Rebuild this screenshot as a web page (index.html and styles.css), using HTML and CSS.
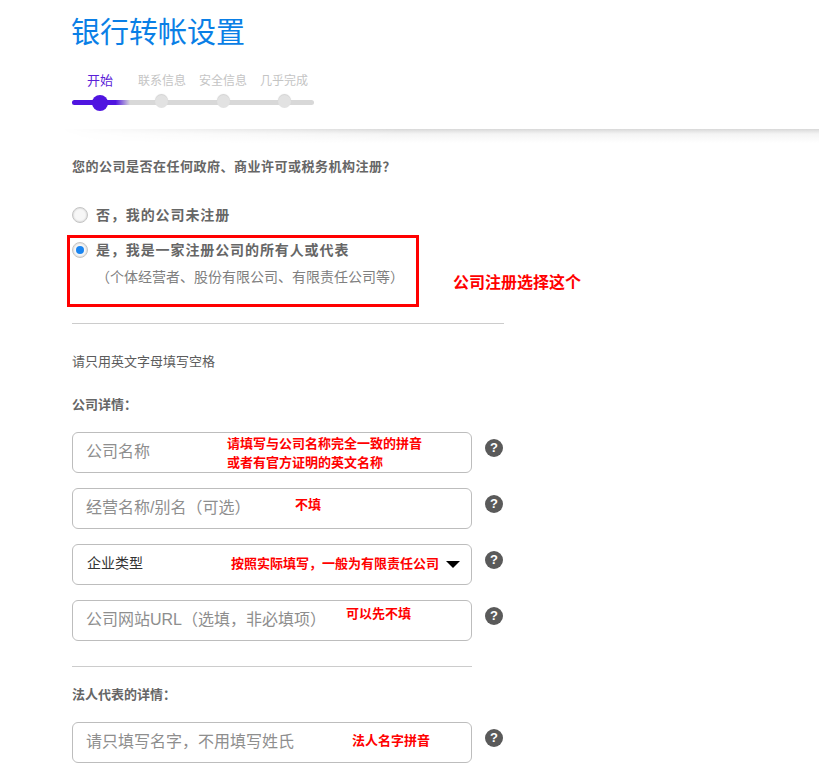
FILE: index.html
```html
<!DOCTYPE html>
<html lang="zh">
<head>
<meta charset="utf-8">
<title>银行转帐设置</title>
<link rel="stylesheet" href="styles.css">
</head>
<body>
<header class="top">
  <h1 class="title">银行转帐设置</h1>
  <div class="steps">
    <div class="labels">
      <span class="label active">开始</span>
      <span class="label">联系信息</span>
      <span class="label">安全信息</span>
      <span class="label">几乎完成</span>
    </div>
    <div class="track">
      <div class="fill"></div>
      <span class="knob on"></span>
      <span class="knob k2"></span>
      <span class="knob k3"></span>
      <span class="knob k4"></span>
    </div>
  </div>
</header>
<main class="main">
  <p class="question">您的公司是否在任何政府、商业许可或税务机构注册？</p>
  <div class="radio-row no"><span class="radio"></span><span class="radio-text">否，我的公司未注册</span></div>
  <div class="radio-row yes"><span class="radio checked"></span><span class="radio-text">是，我是一家注册公司的所有人或代表</span></div>
  <p class="radio-note">（个体经营者、股份有限公司、有限责任公司等）</p>
  <hr class="rule wide">
  <p class="hint">请只用英文字母填写空格</p>
  <h2 class="section">公司详情：</h2>
  <div class="field-row"><div class="field">公司名称</div><span class="help">?</span></div>
  <div class="field-row"><div class="field">经营名称/别名（可选）</div><span class="help">?</span></div>
  <div class="field-row"><div class="field select">企业类型<span class="caret"></span></div><span class="help">?</span></div>
  <div class="field-row"><div class="field">公司网站URL（选填，非必填项）</div><span class="help">?</span></div>
  <hr class="rule">
  <h2 class="section legal">法人代表的详情：</h2>
  <div class="field-row"><div class="field">请只填写名字，不用填写姓氏</div><span class="help">?</span></div>
</main>
<div class="mark-box"></div>
<span class="note big n0">公司注册选择这个</span>
<span class="note n1">请填写与公司名称完全一致的拼音<br>或者有官方证明的英文名称</span>
<span class="note n2">不填</span>
<span class="note n3">按照实际填写，一般为有限责任公司</span>
<span class="note n4">可以先不填</span>
<span class="note n5">法人名字拼音</span>
</body>
</html>
```
FILE: styles.css
```css
* { box-sizing: border-box; }
html, body { margin: 0; height: 769px; overflow: hidden; }
body {
  position: relative;
  background: #fff;
  font-family: "Noto Sans CJK SC", "Noto Sans", sans-serif;
  color: #555;
}
.top {
  position: relative;
  height: 129px;
  padding: 9px 0 0 71px;
}
.top::after {
  content: "";
  position: absolute;
  left: 0;
  right: 0;
  top: 129px;
  height: 14px;
  background: linear-gradient(#d8d8d8, #f4f4f4 35%, #fff);
  -webkit-mask-image: linear-gradient(90deg, transparent 60px, #000 400px);
  mask-image: linear-gradient(90deg, transparent 60px, #000 400px);
}
.title {
  margin: 0;
  font-size: 29px;
  line-height: 42px;
  font-weight: 400;
  color: #0a7fe6;
}
.steps { width: 242px; margin: 20px 0 0 1px; }
.labels { display: flex; height: 18px; padding-left: 15px; gap: 13px; font-size: 12px; line-height: 18px; color: #c4c4c4; }
.label { width: 48px; }
.label.active { width: 38px; font-size: 13px; color: #5a20d8; }
.track {
  position: relative;
  height: 5px;
  margin-top: 11px;
  border-radius: 3px;
  background: #d8d8d8;
}
.fill {
  width: 58px;
  height: 100%;
  border-radius: 3px 0 0 3px;
  background: linear-gradient(90deg, #4f14e0 75%, #d8d8d8);
}
.knob {
  position: absolute;
  top: -5px;
  left: 83px;
  width: 13px;
  height: 13px;
  border-radius: 50%;
  background: #e2e2e2;
  box-shadow: 0 -1px 1px #d0d0d0;
}
.knob.on { left: 20px; top: -5px; width: 16px; height: 16px; background: #4f14e0; box-shadow: none; }
.knob.k3 { left: 145px; }
.knob.k4 { left: 206px; }

.main { padding: 28px 0 0 72px; }
.question { margin: 0; font-size: 13px; letter-spacing: 0.5px; line-height: 18px; font-weight: 700; color: #666; }
.radio-row { display: flex; align-items: center; gap: 8px; height: 18px; font-size: 14px; letter-spacing: 0.9px; font-weight: 700; color: #666; }
.radio-row.no { margin-top: 30px; }
.radio-row.yes { margin-top: 17px; }
.radio {
  width: 16px;
  height: 16px;
  margin-top: 2px;
  border-radius: 50%;
  border: 1px solid #c4c4c4;
  background: #f7f7f7;
  box-shadow: inset 0 0 2px #bbb;
  display: flex;
  align-items: center;
  justify-content: center;
}
.radio.checked::after { content: ""; width: 8px; height: 8px; border-radius: 50%; background: #1a85f0; }
.radio-note { margin: 9px 0 0 24px; font-size: 14px; line-height: 18px; color: #808080; }
.rule { margin: 25px 0 0; border: 0; border-top: 1px solid #ccc; width: 400px; }
.rule.wide { width: 432px; margin-top: 38px; }
.hint { margin: 28px 0 0; font-size: 13px; line-height: 18px; color: #5c5c5c; }
.section { margin: 25px 0 0; font-size: 13px; line-height: 18px; font-weight: 700; color: #666; }
.section.legal { margin-top: 18px; }
.section + .field-row { margin-top: 19px; }
.field-row { display: flex; align-items: flex-start; gap: 13px; height: 41px; margin-bottom: 15px; }
.field {
  position: relative;
  width: 400px;
  height: 41px;
  padding: 0 13px;
  border: 1px solid #bdbdbd;
  border-radius: 6px;
  font-family: "Liberation Sans", "Noto Sans CJK SC", sans-serif;
  font-size: 16px;
  line-height: 37px;
  color: #8e8e8e;
}
.field.select { padding-left: 14px; font-size: 14px; line-height: 36px; color: #333; }
.caret {
  position: absolute;
  right: 11px;
  top: 16px;
  border-left: 7px solid transparent;
  border-right: 7px solid transparent;
  border-top: 7px solid #000;
}
.help {
  width: 18px;
  height: 18px;
  margin-top: 7px;
  border-radius: 50%;
  background: #5a5a5a;
  color: #fff;
  font: 700 13px/18px "Liberation Sans", sans-serif;
  text-align: center;
}
.field-row:last-child { margin-bottom: 0; }

.mark-box {
  position: absolute;
  left: 67px;
  top: 235px;
  width: 352px;
  height: 72px;
  border: 3px solid #f00;
}
.note {
  position: absolute;
  color: #f00;
  font-size: 13px;
  line-height: 18.5px;
  font-weight: 700;
  white-space: nowrap;
}
.note.big { left: 453px; top: 270px; font-size: 16px; line-height: 22px; }
.n1 { left: 227px; top: 434px; }
.n2 { left: 295px; top: 495px; }
.n3 { left: 231px; top: 554px; }
.n4 { left: 346px; top: 604px; }
.n5 { left: 352px; top: 731px; }
```
